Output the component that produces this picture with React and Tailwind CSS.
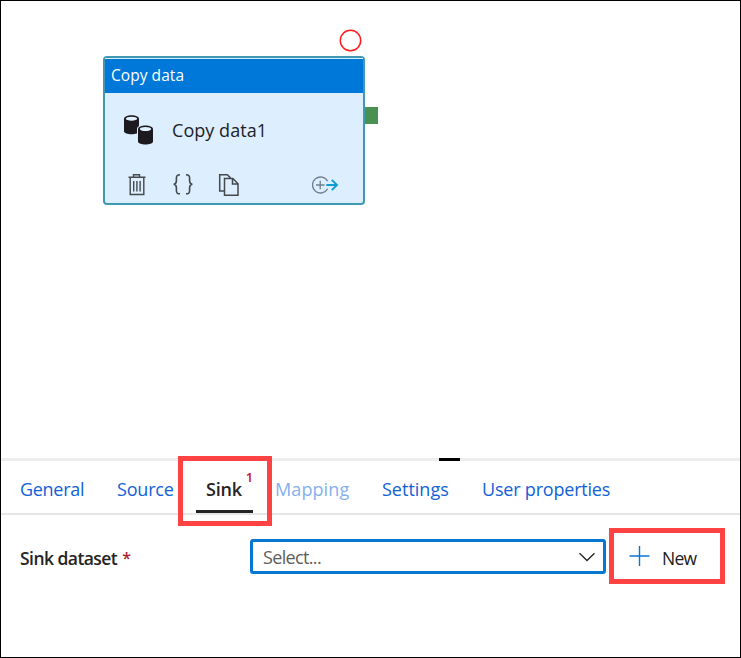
import React from 'react';

function DatabaseIcon() {
  return (
    <svg className="h-[32px] w-[32px]" viewBox="0 0 32 32" aria-hidden="true">
      <path d="M1 5c0-5 15-5 15 0v12.3c0 4-15 4-15 0z" fill="#1c1a1e" />
      <ellipse cx="8.5" cy="4.7" rx="5.7" ry="2" fill="#e0f1ff" />
      <path d="M14 15c0-6 18-6 18 0v15H14z" fill="#ddefff" />
      <path d="M15 15.3c0-5 15-5 15 0v12.3c0 4-15 4-15 0z" fill="#1c1a1e" />
      <ellipse cx="22.5" cy="15" rx="5.7" ry="2" fill="#e0f1ff" />
    </svg>
  );
}

function TrashIcon() {
  return (
    <svg className="h-[24px] w-[20px]" viewBox="0 0 20 24" fill="none" stroke="#44494e" strokeWidth="1.4" aria-hidden="true">
      <path d="M1.5 4.3h17M6.5 4V1.8h6V4M3.2 4.5v17h13.6v-17M6.7 8v10.5M9.9 8v10.5M13.1 8v10.5" />
    </svg>
  );
}

function BracesIcon() {
  return (
    <svg className="h-[24px] w-[22px]" viewBox="0 0 22 24" fill="none" stroke="#44494e" strokeWidth="1.6" aria-hidden="true">
      <path d="M8 1.8c-3 0-3.6 1-3.6 3.2v2.8c0 2-.6 3.3-2.8 3.5 2.2.2 2.8 1.5 2.8 3.5v2.6c0 2.4.6 3.4 3.6 3.4M14 1.8c3 0 3.6 1 3.6 3.2v2.8c0 2 .6 3.3 2.8 3.5-2.2.2-2.8 1.5-2.8 3.5v2.6c0 2.4-.6 3.4-3.6 3.4" />
    </svg>
  );
}

function CopyIcon() {
  return (
    <svg className="h-[24px] w-[22px]" viewBox="0 0 22 24" fill="none" stroke="#44494e" strokeWidth="1.5" aria-hidden="true">
      <path d="M6.3 18H1.7V1.7h7.6l3.2 3.2" />
      <path d="M6.5 5.5h8.3l5.2 5.2v11.6H6.5zM14.5 5.5v5.4H20" />
    </svg>
  );
}

function AddOutputIcon() {
  return (
    <svg className="h-[20px] w-[28px]" viewBox="0 0 28 20" fill="none" aria-hidden="true">
      <path d="M16.6 6.2a8 8 0 1 0 0 7.6M9.2 5.7v8.6M5 10h8.5" stroke="#727d8e" strokeWidth="1.3" />
      <path d="M15.3 10h10.5M20.8 4.8l5.2 5.2-5.2 5.2" stroke="#0f9bd3" strokeWidth="1.9" />
    </svg>
  );
}

function ActivityNode() {
  return (
    <div className="absolute left-[102px] top-[55px] h-[149px] w-[262px] rounded-[4px] border-2 border-[#3f98b4] bg-[#ddefff]">
      <div className="flex h-[35px] items-center border-t border-[#d5efff] bg-[#0078d9] pl-[6px] text-[15.5px] text-white">
        <span className="whitespace-nowrap tracking-[0.05px]">Copy data</span>
      </div>
      <div className="flex h-[74px] items-center pl-[18px]">
        <DatabaseIcon />
        <span className="ml-[17px] whitespace-nowrap text-[18px] tracking-[0.05px] text-[#202124]">Copy data1</span>
      </div>
      <div className="flex h-[36px] items-center pl-[22px]">
        <TrashIcon />
        <div className="ml-[25px]"><BracesIcon /></div>
        <div className="ml-[24px]"><CopyIcon /></div>
        <div className="ml-[71px]"><AddOutputIcon /></div>
      </div>
    </div>
  );
}

function Tabs() {
  return (
    <div className="flex h-[54px] border-b-2 border-[#e6e6e6] pl-[19px] text-[18px] leading-[57px] whitespace-nowrap text-[#1161d8]">
      <span className="w-[97px] tracking-[-0.3px]">General</span>
      <span className="w-[79px] tracking-[-0.2px]">Source</span>
      <span className="flex h-[52px] w-[57px] border-b-[3px] border-[#252423] pl-[10px] font-semibold tracking-[-0.2px] text-[#252423]">
        Sink
        <sup className="relative top-[-12px] ml-[4px] text-[13px] leading-[57px] font-semibold text-[#c50f2e]">1</sup>
      </span>
      <span className="ml-[22px] w-[107px] tracking-[0.1px] text-[#84b0ef]">Mapping</span>
      <span className="w-[100px] tracking-[0px]">Settings</span>
      <span className="tracking-[-0.2px]">User properties</span>
    </div>
  );
}

export default function App() {
  return (
    <div className="relative flex h-[658px] w-[741px] flex-col overflow-hidden border border-black bg-white font-['Open_Sans','Noto_Sans',sans-serif]">
      <div className="relative h-[457px] shrink-0">
        <ActivityNode />
        <svg className="absolute left-[338px] top-[28px] h-[23px] w-[23px]" viewBox="0 0 23 23" aria-hidden="true">
          <circle cx="11.5" cy="11.5" r="10.2" fill="none" stroke="#ff1e1e" strokeWidth="1.5" />
        </svg>
        <div className="absolute left-[364px] top-[106px] h-[17px] w-[13px] bg-[#489150]" />
      </div>
      <div className="flex h-[3px] shrink-0 bg-[#ededed]">
        <div className="ml-[438px] h-[3px] w-[21px] bg-black" />
      </div>
      <Tabs />
      <div className="flex pl-[19px] pt-[24px] text-[18px]">
        <div className="flex h-[37px] w-[230px] items-center whitespace-nowrap pt-px font-semibold text-[#252423]">
          <span className="text-[17.5px] tracking-[-0.55px]">Sink dataset</span>
          <span className="ml-[5px] text-[16px] font-semibold text-[#b0212d]">*</span>
        </div>
        <div className="flex h-[35px] w-[356px] items-center justify-between rounded-[3px] border-[3px] border-[#0877d2] pl-[10px] pr-[7px] text-[#605e5c]">
          <span className="relative top-px tracking-[-0.65px]">Select...</span>
          <svg className="h-[12px] w-[18px]" viewBox="0 0 18 12" fill="none" stroke="#252423" strokeWidth="1.3" aria-hidden="true">
            <path d="m1.5 2.2 7.5 7.3 7.5-7.3" />
          </svg>
        </div>
        <div className="ml-[23px] flex h-[36px] items-center">
          <svg className="h-[22px] w-[22px]" viewBox="0 0 22 22" fill="none" stroke="#0877d2" strokeWidth="1.4" aria-hidden="true">
            <path d="M.5 10h20M10.5 0v20" />
          </svg>
          <span className="relative top-px ml-[11px] text-[17.5px] tracking-[-0.7px] text-[#202020]">New</span>
        </div>
      </div>
      <div className="absolute left-[177px] top-[455px] h-[70px] w-[94px] border-[5px] border-[#ff4343]" />
      <div className="absolute left-[608px] top-[527px] h-[56px] w-[116px] border-[5px] border-[#ff4343]" />
    </div>
  );
}
